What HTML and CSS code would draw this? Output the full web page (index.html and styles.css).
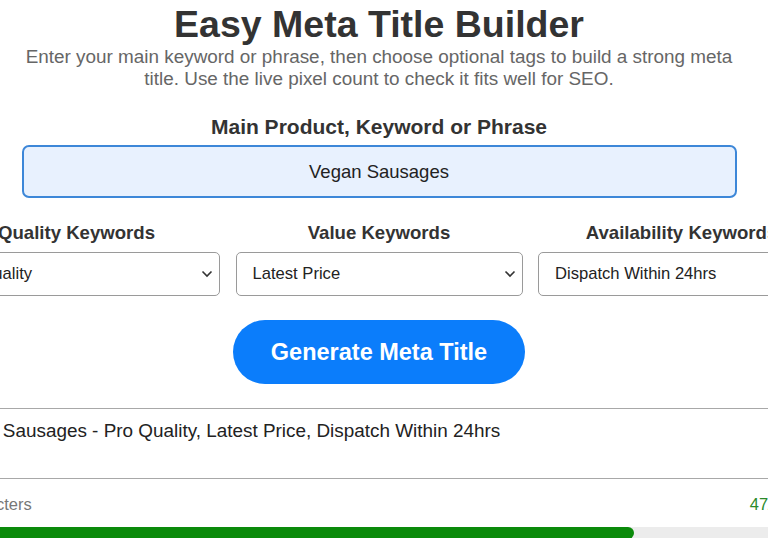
FILE: index.html
```html
<!DOCTYPE html>
<html lang="en">
<head>
<meta charset="utf-8">
<title>Easy Meta Title Builder</title>
<link rel="stylesheet" href="styles.css">
</head>
<body>
<div class="page">
  <h1 class="title">Easy Meta Title Builder</h1>
  <p class="subtitle">Enter your main keyword or phrase, then choose optional tags to build a strong meta title. Use the live pixel count to check it fits well for SEO.</p>

  <label class="main-label">Main Product, Keyword or Phrase</label>
  <div class="main-input">Vegan Sausages</div>

  <div class="options">
    <div class="option">
      <div class="opt-label">Quality Keywords</div>
      <div class="select"><span>Pro Quality</span><svg class="chev" width="12" height="8" viewBox="0 0 12 8"><path d="M1.5 1.5 L6 6 L10.5 1.5" fill="none" stroke="#333" stroke-width="1.6"/></svg></div>
    </div>
    <div class="option">
      <div class="opt-label">Value Keywords</div>
      <div class="select"><span>Latest Price</span><svg class="chev" width="12" height="8" viewBox="0 0 12 8"><path d="M1.5 1.5 L6 6 L10.5 1.5" fill="none" stroke="#333" stroke-width="1.6"/></svg></div>
    </div>
    <div class="option">
      <div class="opt-label">Availability Keywords</div>
      <div class="select"><span>Dispatch Within 24hrs</span><svg class="chev" width="12" height="8" viewBox="0 0 12 8"><path d="M1.5 1.5 L6 6 L10.5 1.5" fill="none" stroke="#333" stroke-width="1.6"/></svg></div>
    </div>
  </div>

  <div class="btn-row"><button class="generate">Generate Meta Title</button></div>

  <div class="output">Vegan Sausages - Pro Quality, Latest Price, Dispatch Within 24hrs</div>

  <div class="stats"><span class="count-label">Characters</span><span class="count-value">47/60</span></div>
  <div class="progress"><div class="bar" style="width:78.6%"></div></div>
</div>
</body>
</html>
```

FILE: styles.css
```css
html, body {
  margin: 0;
  padding: 0;
  background: #ffffff;
  overflow: hidden;
}
body {
  font-family: "Liberation Sans", Arial, sans-serif;
  color: #333333;
}
.page {
  width: 892px;
  margin-left: -67px;
  display: flex;
  flex-direction: column;
}
.title {
  margin: 3px 0 0;
  font-size: 37.5px;
  line-height: 43px;
  font-weight: 700;
  text-align: center;
  color: #333333;
}
.subtitle {
  margin: 0 auto;
  width: 730px;
  font-size: 18.9px;
  line-height: 22px;
  color: #666666;
  text-align: center;
}
.main-label {
  margin-top: 24px;
  font-size: 21px;
  line-height: 25px;
  font-weight: 700;
  text-align: center;
  color: #333333;
}
.main-input {
  margin: 6px auto 0;
  width: 711px;
  height: 49px;
  border: 2px solid #3d87d8;
  border-radius: 7px;
  background: #e8f1fe;
  display: flex;
  align-items: center;
  justify-content: center;
  font-size: 18.5px;
  color: #222222;
}
.options {
  margin-top: 24px;
  display: grid;
  grid-template-columns: repeat(3, 287px);
  column-gap: 15.5px;
}
.option {
  display: flex;
  flex-direction: column;
  gap: 8px;
}
.opt-label {
  font-size: 18.6px;
  line-height: 22px;
  font-weight: 700;
  text-align: center;
  color: #333333;
  white-space: nowrap;
}
.select {
  height: 42px;
  border: 1px solid #9a9a9a;
  border-radius: 5px;
  padding: 0 6px 0 16px;
  display: flex;
  align-items: center;
  justify-content: space-between;
  font-size: 16.6px;
  color: #222222;
}
.chev {
  display: block;
}
.btn-row {
  margin-top: 24px;
  display: flex;
  justify-content: center;
}
.generate {
  width: 292px;
  height: 64px;
  border: none;
  border-radius: 32px;
  background: #0b7dfb;
  color: #ffffff;
  font-family: "Liberation Sans", Arial, sans-serif;
  font-size: 23.5px;
  font-weight: 700;
  padding: 0;
}
.output {
  margin-top: 24px;
  height: 58px;
  border: 1.5px solid #a8a8a8;
  border-radius: 4px;
  padding: 11px 10px 0;
  font-size: 18.9px;
  line-height: 22px;
  color: #222222;
  white-space: nowrap;
}
.stats {
  margin-top: 15px;
  padding: 0 34px 0 18px;
  display: flex;
  justify-content: space-between;
  font-size: 16.5px;
  line-height: 20px;
}
.count-label {
  color: #777777;
}
.count-value {
  color: #2a8a2a;
}
.progress {
  margin-top: 13px;
  height: 12px;
  background: #ececec;
  border-radius: 6px;
  overflow: hidden;
}
.bar {
  height: 100%;
  background: #0a8a0a;
  border-radius: 6px;
}
```
